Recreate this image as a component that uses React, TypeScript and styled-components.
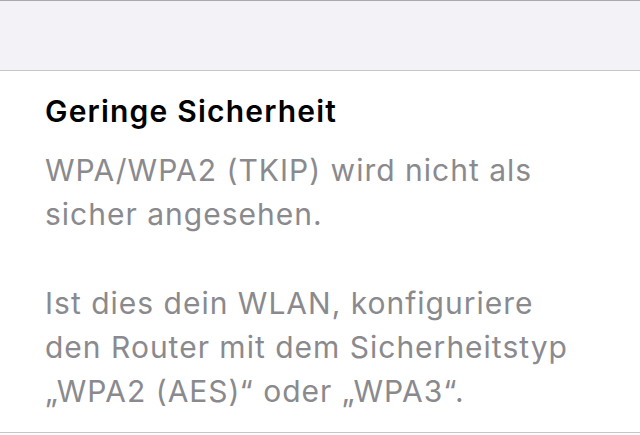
import styled, { createGlobalStyle } from 'styled-components';

const GlobalStyle = createGlobalStyle`
  html, body {
    margin: 0;
    padding: 0;
    background: #ffffff;
  }
  body {
    font-family: Inter, "Noto Sans", "Liberation Sans", sans-serif;
    -webkit-font-smoothing: antialiased;
  }
`;

const Screen = styled.div`
  width: 640px;
  height: 435px;
  overflow: hidden;
  background: #ffffff;
  display: flex;
  flex-direction: column;
`;

const GroupedHeader = styled.div`
  height: 69px;
  background: #f2f2f7;
  border-top: 1px solid #a9a9ae;
  border-bottom: 1px solid #c6c6c8;
  flex-shrink: 0;
`;

const Notice = styled.section`
  padding: 20px 45px 0;
  border-bottom: 1px solid #c6c6c8;
  height: 362px;
  box-sizing: border-box;
  flex-shrink: 0;
`;

const Title = styled.h2`
  margin: 0;
  font-size: 30px;
  font-weight: 600;
  line-height: 40px;
  color: #000000;
  letter-spacing: 1.2px;
`;

const Paragraph = styled.p<{ $gap?: number }>`
  margin: ${p => p.$gap ?? 0}px 0 0;
  font-size: 30px;
  font-weight: 400;
  line-height: 44px;
  color: #8a8a8e;
  letter-spacing: 1px;
`;

export default function App() {
  return (
    <>
      <GlobalStyle />
      <Screen>
        <GroupedHeader />
        <Notice>
          <Title>Geringe Sicherheit</Title>
          <Paragraph $gap={17}>
            WPA/WPA2 (TKIP) wird nicht als
            <br />
            sicher angesehen.
          </Paragraph>
          <Paragraph $gap={45}>
            Ist dies dein WLAN, konfiguriere
            <br />
            den Router mit dem Sicherheitstyp
            <br />
            „WPA2 (AES)“ oder „WPA3“.
          </Paragraph>
        </Notice>
      </Screen>
    </>
  );
}
